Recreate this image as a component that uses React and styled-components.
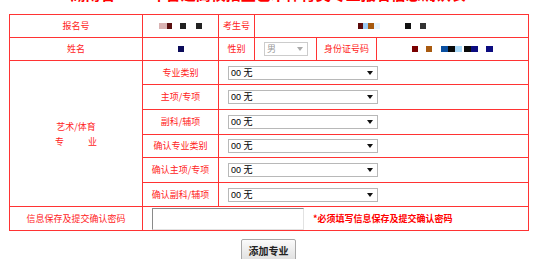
import React from 'react';
import styled, { createGlobalStyle } from 'styled-components';

const Global = createGlobalStyle`
  html, body { margin: 0; padding: 0; background: #fff; }
  body { font-family: "Noto Sans CJK SC", "Liberation Sans", sans-serif; }
`;

const Page = styled.div`
  width: 550px;
  height: 259px;
  overflow: hidden;
  padding-left: 9px;
  box-sizing: border-box;
`;

const Title = styled.div`
  width: 518px;
  height: 20px;
  margin-top: -16px;
  margin-bottom: 10px;
  text-align: center;
  color: #f00;
  font-weight: bold;
  font-size: 15px;
  line-height: 20px;
  white-space: nowrap;
`;

const Table = styled.table`
  width: 519px;
  border-collapse: collapse;
  table-layout: fixed;
  font-size: 9px;
  color: #f22;
`;

const Cell = styled.td`
  border: 1px solid #f33;
  height: ${(p) => p.$h || 22}px;
  padding: 0 ${(p) => (p.$left ? '9px' : '0')};
  text-align: ${(p) => (p.$left ? 'left' : 'center')};
  vertical-align: middle;
  line-height: 12px;
  white-space: nowrap;
  overflow: hidden;
`;

const Mask = styled.div`
  display: flex;
  justify-content: center;
  align-items: center;
  height: 8px;
`;

const Pixel = styled.span`
  display: block;
  width: ${(p) => p.$w}px;
  height: ${(p) => p.$hh || 6}px;
  margin-left: ${(p) => p.$ml || 0}px;
  background: ${(p) => p.$c};
  filter: blur(0.4px);
`;

const SelectBox = styled.div`
  display: flex;
  align-items: center;
  justify-content: space-between;
  width: ${(p) => p.$w}px;
  height: 14px;
  box-sizing: border-box;
  border: 1px solid ${(p) => (p.$disabled ? '#ccc' : '#b8b8b8')};
  background: #fff;
  padding: 0 4px 0 2px;
  font-family: "Liberation Sans", "Noto Sans CJK SC", sans-serif;
  font-size: 9px;
  line-height: 12px;
  color: ${(p) => (p.$disabled ? '#999' : '#000')};
`;

const Arrow = styled.span`
  width: 0;
  height: 0;
  border-left: 3px solid transparent;
  border-right: 3px solid transparent;
  border-top: 4px solid ${(p) => (p.$disabled ? '#aaa' : '#111')};
`;

const FieldRow = styled.div`
  display: flex;
  align-items: center;
  gap: 9px;
`;

const PassInput = styled.div`
  width: 152px;
  height: 22px;
  box-sizing: border-box;
  border-top: 1px solid #8a8a8a;
  border-left: 1px solid #8a8a8a;
  border-right: 1px solid #e2e2e2;
  border-bottom: 1px solid #e2e2e2;
  background: #fff;
`;

const Warn = styled.span`
  color: #f00;
  font-weight: bold;
  font-size: 9px;
`;

const GroupLabel = styled.div`
  display: flex;
  flex-direction: column;
  align-items: center;
  line-height: 15px;
`;

const Spread = styled.div`
  width: 42px;
  display: flex;
  justify-content: space-between;
`;

const ButtonBar = styled.div`
  width: 519px;
  display: flex;
  justify-content: center;
  margin-top: 8px;
`;

const Button = styled.button`
  width: 55px;
  height: 23px;
  padding: 0;
  border: 1px solid #a8a8a8;
  border-radius: 2px;
  background: linear-gradient(#fbfbfb, #dedede);
  font-family: "Noto Sans CJK SC", sans-serif;
  font-weight: bold;
  font-size: 10px;
  color: #222;
`;

const masks = {
  regNo: [
    [8, '#d9b3b3', 0],
    [5, '#5a1010', 0],
    [6, '#222', 8],
    [6, '#222', 10],
  ],
  examNo: [
    [5, '#5c0a0a', 0],
    [5, '#9ccaf3', 0],
    [6, '#a65a10', 0],
    [6, '#e6f4ff', 0],
    [6, '#111', 25],
    [6, '#333', 9],
  ],
  name: [[6, '#0c0c5a', 0]],
  id: [
    [6, '#7a0000', 0],
    [6, '#a85a10', 8],
    [7, '#0a4fa0', 9],
    [7, '#0a0a0a', 0],
    [7, '#a8d8f8', 0],
    [7, '#0a0a0a', 2],
    [7, '#0c0c80', 0],
    [7, '#0c0c80', 8],
  ],
};

const MaskValue = ({ data }) => (
  <Mask>
    {data.map(([w, c, ml], i) => (
      <Pixel key={i} $w={w} $c={c} $ml={ml} />
    ))}
  </Mask>
);

const Select = ({ w = 150, value = '00 无', disabled }) => (
  <SelectBox $w={w} $disabled={disabled}>
    <span>{value}</span>
    <Arrow $disabled={disabled} />
  </SelectBox>
);

const majorRows = [
  ['专业类别', 23],
  ['主项/专项', 24],
  ['副科/辅项', 24],
  ['确认专业类别', 22],
  ['确认主项/专项', 24],
  ['确认副科/辅项', 23],
];

export default function App() {
  return (
    <>
      <Global />
      <Page>
        <Title>湖南省2025年普通高校招生艺术体育类专业报名信息确认表</Title>
        <Table>
          <colgroup>
            <col style={{ width: 133 }} />
            <col style={{ width: 76 }} />
            <col style={{ width: 36 }} />
            <col style={{ width: 62 }} />
            <col style={{ width: 60 }} />
            <col style={{ width: 152 }} />
          </colgroup>
          <tbody>
            <tr>
              <Cell>报名号</Cell>
              <Cell>
                <MaskValue data={masks.regNo} />
              </Cell>
              <Cell>考生号</Cell>
              <Cell colSpan={3}>
                <MaskValue data={masks.examNo} />
              </Cell>
            </tr>
            <tr>
              <Cell>姓名</Cell>
              <Cell>
                <MaskValue data={masks.name} />
              </Cell>
              <Cell>性别</Cell>
              <Cell $left>
                <Select w={44} value="男" disabled />
              </Cell>
              <Cell>身份证号码</Cell>
              <Cell>
                <MaskValue data={masks.id} />
              </Cell>
            </tr>
            {majorRows.map(([label, h], i) => (
              <tr key={label}>
                {i === 0 && (
                  <Cell rowSpan={6}>
                    <GroupLabel>
                      <span>艺术/体育</span>
                      <Spread>
                        <span>专</span>
                        <span>业</span>
                      </Spread>
                    </GroupLabel>
                  </Cell>
                )}
                <Cell $h={h}>{label}</Cell>
                <Cell colSpan={4} $left>
                  <Select />
                </Cell>
              </tr>
            ))}
            <tr>
              <Cell $h={23}>信息保存及提交确认密码</Cell>
              <Cell colSpan={5} $left>
                <FieldRow>
                  <PassInput />
                  <Warn>*必须填写信息保存及提交确认密码</Warn>
                </FieldRow>
              </Cell>
            </tr>
          </tbody>
        </Table>
        <ButtonBar>
          <Button>添加专业</Button>
        </ButtonBar>
      </Page>
    </>
  );
}
